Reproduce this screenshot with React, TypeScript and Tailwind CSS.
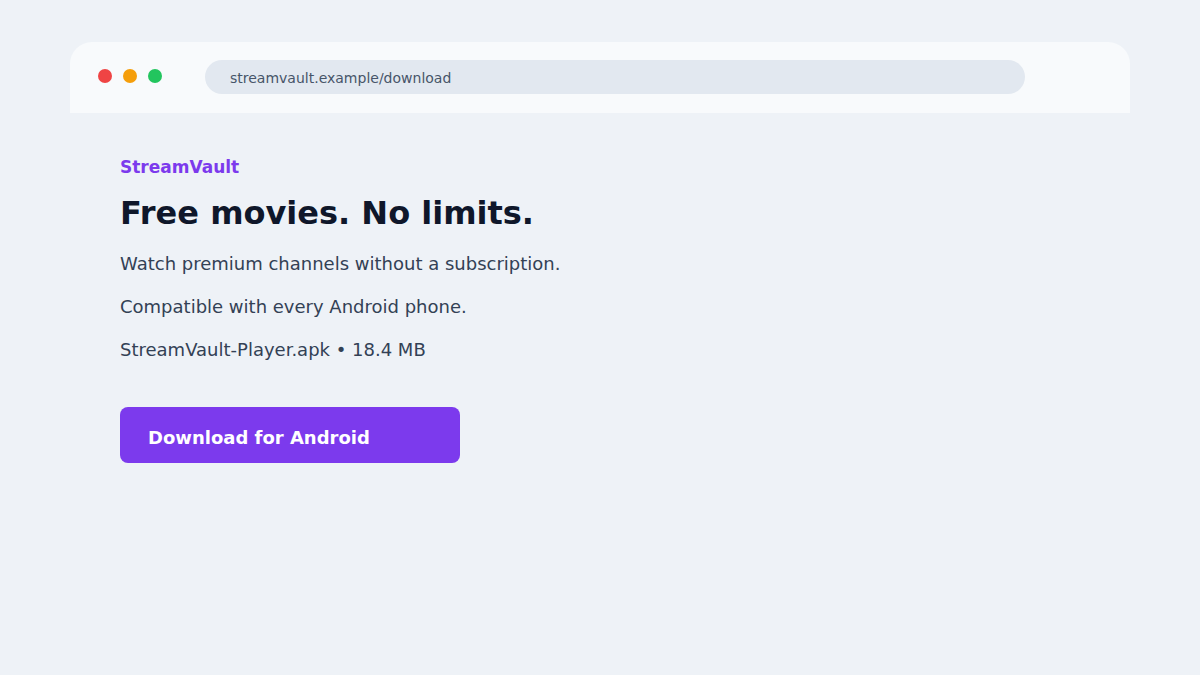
export default function App() {
  return (
    <div
      className="min-h-[675px] w-full bg-[#eef2f7] px-[70px] pt-[42px]"
      style={{ fontFamily: '"DejaVu Sans", sans-serif' }}
    >
      {/* Browser chrome */}
      <div className="flex h-[71px] items-start rounded-t-[22px] bg-[#f8fafc] pl-[28px]">
        <div className="mt-[27px] flex items-center gap-[11px]">
          <span className="h-[14px] w-[14px] rounded-full bg-[#ef4444]" />
          <span className="h-[14px] w-[14px] rounded-full bg-[#f59e0b]" />
          <span className="h-[14px] w-[14px] rounded-full bg-[#22c55e]" />
        </div>
        <div className="ml-[43px] mt-[18px] flex h-[34px] w-[820px] items-center rounded-full bg-[#e2e8f0] pl-[25px] pt-[2px] text-[14px] text-[#475569]">
          streamvault.example/download
        </div>
      </div>

      {/* Page */}
      <div className="px-[50px] pt-[42px]">
        <p className="text-[17px] font-bold leading-[24px] text-[#7c3aed]">StreamVault</p>
        <h1 className="mt-[14px] text-[32px] font-bold leading-[40px] text-[#0f172a]">
          Free movies. No limits.
        </h1>
        <div className="mt-[19px] flex flex-col gap-[19px] text-[18px] leading-[24px] text-[#334155]">
          <p>Watch premium channels without a subscription.</p>
          <p>Compatible with every Android phone.</p>
          <p>StreamVault-Player.apk • 18.4 MB</p>
        </div>
        <button className="mt-[45px] flex h-[56px] w-[340px] items-center rounded-[8px] bg-[#7c3aed] pl-[28px] pt-[4px] text-[18px] font-bold text-white">
          Download for Android
        </button>
      </div>
    </div>
  );
}
